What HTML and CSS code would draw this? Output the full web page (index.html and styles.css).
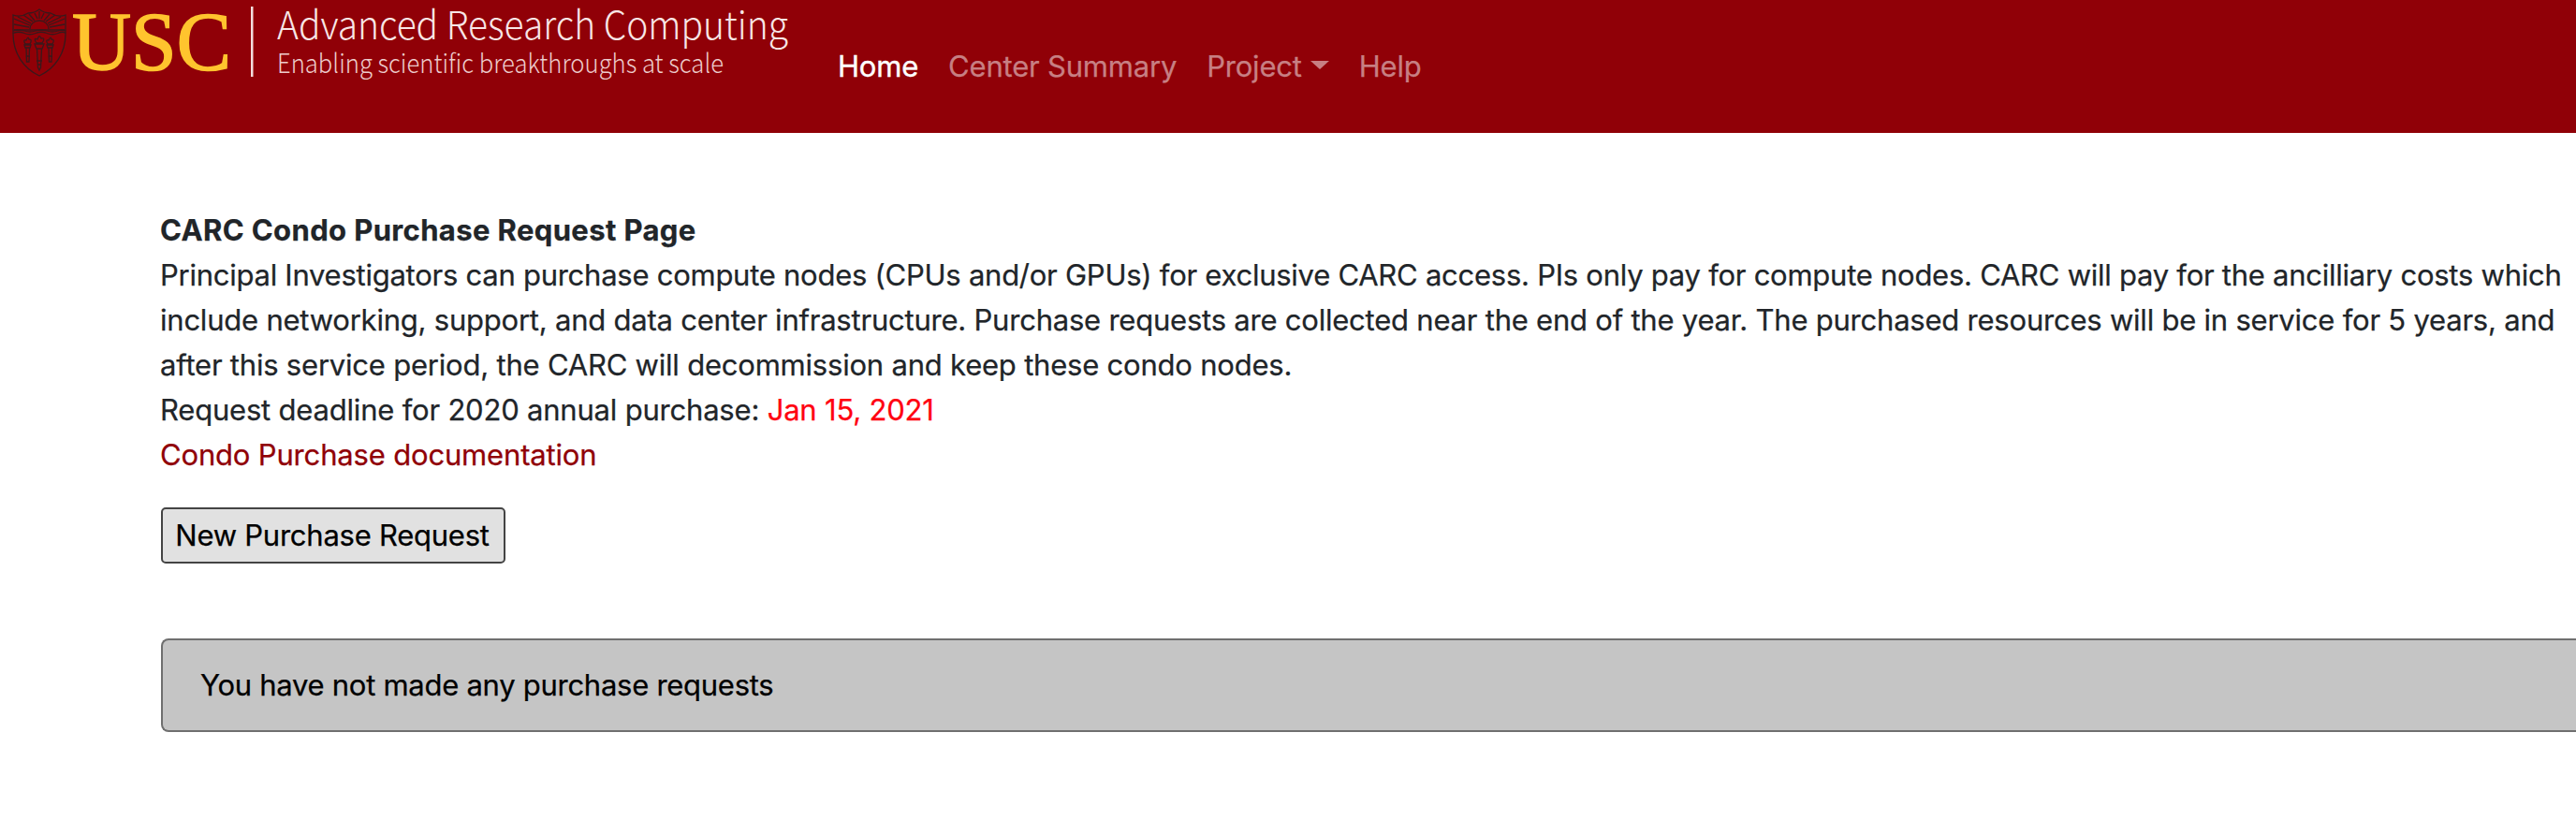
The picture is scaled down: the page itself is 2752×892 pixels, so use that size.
FILE: index.html
```html
<!DOCTYPE html>
<html lang="en">
<head>
<meta charset="utf-8">
<title>CARC Condo Purchase Request</title>
<link rel="stylesheet" href="styles.css">
</head>
<body>
<header class="navbar">
  <a class="brand">
    <svg class="logo" width="860" height="142" viewBox="0 0 860 142">
      <g class="shield">
        <path d="M14 16 Q22 19 30 14 Q37 14 42 10 Q47 14 54 14 Q62 19 70 16 V36 C70 57 59 73 42 81 C25 73 14 57 14 36Z"/>
        <path d="M15 32 H69 M32 31 A10 9 0 0 1 52 31"/>
        <path d="M32 27 L15 20 M33 25 L19 18 M35 23 L25 16 M37 22 L31 15 M40 20 L37 14 M42 20 V12 M44 20 L47 14 M47 22 L53 15 M49 23 L59 16 M51 25 L65 18 M52 27 L69 20 M31 29 L15 26 M53 29 L69 26"/>
        <path d="M14 33 Q20 31 26 33 T38 33 T50 33 T62 33 T70 33 M14 35.500 Q20 33 26 35.500 T38 35.500 T50 35.500 T62 35.500 T70 35.500"/>
        <path d="M27 47 Q24 42 28 43 Q30 38 31 42 Q35 42 32 47Z M26 48 H33 L32 51 H27Z M28 51 L28.500 66 H31 L31.500 51 M27.500 60 H32 M51 47 Q48 42 52 43 Q54 38 55 42 Q59 42 56 47Z M50 48 H57 L56 51 H51Z M52 51 L52.500 66 H55 L55.500 51 M51.500 60 H56"/>
        <path d="M39 46 Q35 40 40 42 Q42 36 44 41 Q49 40 45 46Z M37 47 H47 L45 52 H39Z M39.500 52 L40.500 72 L42 75 L43.500 72 L44.500 52 M39 65 H45 M40 69 H44"/>
      </g>
      <text class="usc" x="77" y="74" textLength="170" lengthAdjust="spacingAndGlyphs">USC</text>
      <rect class="rule" x="268" y="7" width="2.500" height="75"/>
      <text class="title" x="296" y="41.500" textLength="546" lengthAdjust="spacingAndGlyphs">Advanced Research Computing</text>
      <text class="tagline" x="296" y="78" textLength="477" lengthAdjust="spacingAndGlyphs">Enabling scientific breakthroughs at scale</text>
    </svg>
  </a>
  <nav class="nav">
    <a class="nav-link active">Home</a>
    <a class="nav-link center">Center Summary</a>
    <a class="nav-link project">Project<span class="caret"></span></a>
    <a class="nav-link help">Help</a>
  </nav>
</header>
<main class="content">
  <div class="intro">
    <div><strong class="heading">CARC Condo Purchase Request Page</strong></div>
    <div><span class="l1">Principal Investigators can purchase compute nodes (CPUs and/or GPUs) for exclusive CARC access. PIs only pay for compute nodes. CARC will pay for the ancilliary costs which</span></div>
    <div><span class="l2">include networking, support, and data center infrastructure. Purchase requests are collected near the end of the year. The purchased resources will be in service for 5 years, and</span></div>
    <div><span class="l3">after this service period, the CARC will decommission and keep these condo nodes.</span></div>
    <div><span class="l4">Request deadline for 2020 annual purchase: <span class="deadline">Jan 15, 2021</span></span></div>
    <div><a class="doc-link">Condo Purchase documentation</a></div>
  </div>
  <button class="request-button">New Purchase Request</button>
  <div class="notice"><span class="notice-text">You have not made any purchase requests</span></div>
</main>
</body>
</html>
```
FILE: styles.css
```css
* { box-sizing: border-box; }
body {
  margin: 0;
  background: #fff;
  color: #212529;
  font: 31px/48px Inter, "Liberation Sans", sans-serif;
  letter-spacing: -.2px;
  -webkit-text-stroke: .25px currentColor;
  overflow: hidden;
}
.navbar {
  display: flex;
  height: 142px;
  background: #900007;
}
.brand { width: 895px; letter-spacing: 0; -webkit-text-stroke: 0; }
.logo { display: block; }
.shield { fill: none; stroke: #38191c; stroke-width: 1.3; }
.usc { fill: #ffc42e; stroke: #ffc42e; stroke-width: 1.6; font: 88px "Liberation Serif", serif; }
.rule { fill: #f3dede; }
.title, .tagline { fill: #f8e6e6; font-family: "Noto Sans CJK SC", "Open Sans", sans-serif; font-weight: 300; }
.title { font-size: 41px; }
.tagline { font-size: 28px; fill: #edcccc; }
.nav { display: flex; align-items: flex-start; gap: 32px; padding-top: 47px; }
.nav-link { display: flex; align-items: center; white-space: nowrap; color: #c77f83; }
.nav-link.active { color: #fff; -webkit-text-stroke: .4px #fff; }
.caret {
  margin-left: 9px;
  margin-bottom: 4px;
  border: 10px solid transparent;
  border-top: 9px solid #c77f83;
  border-bottom: 0;
}
.content { padding: 80px 0 0 172px; }
.intro > div { height: 48px; margin-left: -1px; white-space: nowrap; }
.heading { font-weight: 700; letter-spacing: .38px; }
.l1 { letter-spacing: -.255px; }
.l2 { letter-spacing: -.22px; }
.l3 { letter-spacing: -.21px; }
.deadline { color: #ff0010; }
.doc-link { color: #900007; letter-spacing: -.17px; }
.request-button {
  display: block;
  width: 368px;
  height: 60px;
  margin-top: 32px;
  padding: 0 2px 0 0;
  border: 2px solid #444;
  border-radius: 5px;
  background: #e1e1e1;
  color: #000;
  font: inherit;
  letter-spacing: -.25px;
  white-space: nowrap;
}
.notice {
  height: 100px;
  margin-top: 80px;
  padding: 24px 40px;
  border: 2px solid #6f6f6f;
  border-right: 0;
  border-radius: 8px 0 0 8px;
  background: #c5c5c5;
  color: #000;
  letter-spacing: -.27px;
}
```
